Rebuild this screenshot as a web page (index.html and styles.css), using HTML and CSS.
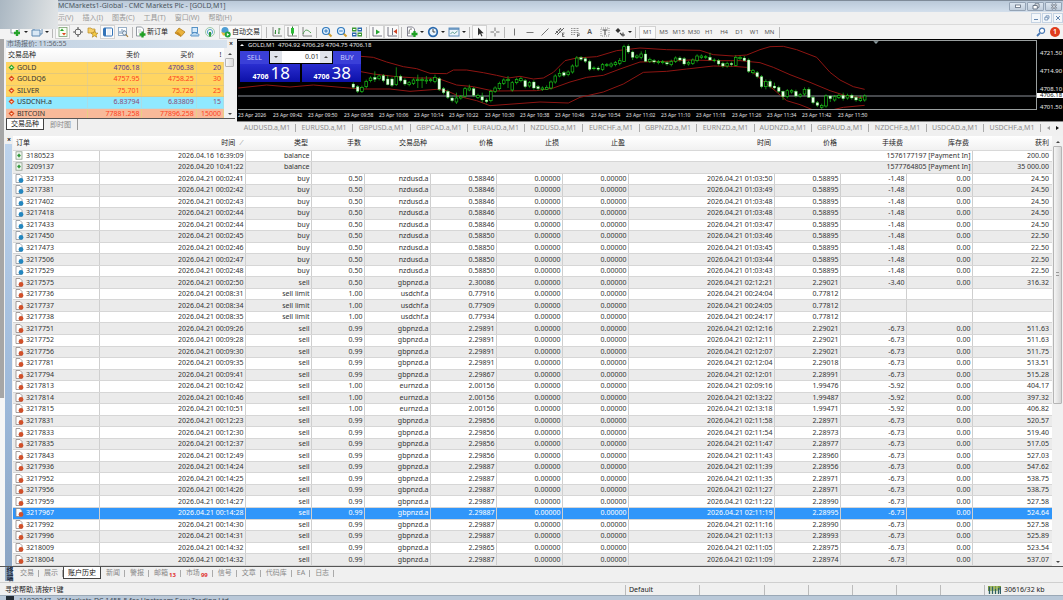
FILE: index.html
```html
<!DOCTYPE html>
<html lang="zh-CN">
<head>
<meta charset="utf-8">
<title>MCMarkets1-Global</title>
<link rel="stylesheet" href="styles.css">
</head>
<body>
<svg class="defs" aria-hidden="true">
  <symbol id="doc-buy" viewBox="0 0 9 9"><path d="M1 .5h4L7 2.500V8.500H1z" fill="#fff" stroke="#8a9099" stroke-width=".8"/><circle cx="6" cy="6.400" r="2.400" fill="#2387c0"/></symbol>
  <symbol id="doc-sell" viewBox="0 0 9 9"><path d="M1 .5h4L7 2.500V8.500H1z" fill="#fff" stroke="#8f8583" stroke-width=".8"/><circle cx="6" cy="6.400" r="2.400" fill="#d2502a"/></symbol>
  <symbol id="doc-balance" viewBox="0 0 9 9"><rect x="1" y=".8" width="6" height="7.400" fill="#f4faf4" stroke="#8a9a8a" stroke-width=".8"/><path d="M4 2.800V6.200M2.300 4.500H5.700" stroke="#2f9638" stroke-width="1.600"/></symbol>
  <symbol id="up" viewBox="0 0 7 7"><path d="M3.500 .5 6.500 3.500 3.500 6.500 .5 3.500z" fill="#2fa52f"/><path d="M3.500 2 5 4H2z" fill="#d8ffd0"/></symbol>
  <symbol id="down" viewBox="0 0 7 7"><path d="M3.500 .5 6.500 3.500 3.500 6.500 .5 3.500z" fill="#dc4a1c"/><path d="M3.500 5 5 3H2z" fill="#ffd9b8"/></symbol>
</svg>

<header class="titlebar">
  <h1 class="title">MCMarkets1-Global - CMC Markets Plc - [GOLD,M1]</h1>
  <div class="win-buttons">
    <button class="win" aria-label="最小化"><svg width="8" height="6" viewBox="0 0 8 6"><rect x="1.500" y="2" width="5" height="2.500" fill="#fff" stroke="#5f6c7d" stroke-width=".8"/></svg></button>
    <button class="win" aria-label="还原"><svg width="8" height="7" viewBox="0 0 8 7"><path d="M3 2V.8h4v3.500H5.500M1 2.500h4.300v3.500H1z" fill="#fff" stroke="#5f6c7d" stroke-width=".9"/></svg></button>
    <button class="win" aria-label="关闭"><svg width="8" height="7" viewBox="0 0 8 7"><path d="M1.500 1 6.500 6M6.500 1 1.500 6" stroke="#5f6c7d" stroke-width="2.200"/><path d="M1.500 1 6.500 6M6.500 1 1.500 6" stroke="#fff" stroke-width=".9"/></svg></button>
  </div>
</header>

<nav class="menubar">
  <button class="menu">显示(V)</button><button class="menu">插入(I)</button><button class="menu">图表(C)</button><button class="menu">工具(T)</button><button class="menu">窗口(W)</button><button class="menu">帮助(H)</button>
  <div class="child-buttons">
    <button class="child" aria-label="最小化子窗口"><svg width="6" height="6" viewBox="0 0 6 6"><path d="M1 4.500h4" stroke="#6486ad"/></svg></button>
    <button class="child" aria-label="还原子窗口"><svg width="6" height="6" viewBox="0 0 6 6"><path d="M2 2V.8h3v2.500H4M.8 2.300h3v2.700h-3z" fill="none" stroke="#6486ad" stroke-width=".8"/></svg></button>
    <button class="child" aria-label="关闭子窗口"><svg width="6" height="6" viewBox="0 0 6 6"><path d="M1 1 5 5M5 1 1 5" stroke="#6486ad"/></svg></button>
  </div>
</nav>
<div class="cover"></div>

<div class="toolbar">
  <button class="tool" aria-label="新图表"><svg width="12" height="12" viewBox="0 0 12 12"><rect x="1" y="1" width="8" height="6" fill="#fff" stroke="#7d8b99" stroke-width=".8"/><path d="M7 4v6M4 7h6" stroke="#26a32a" stroke-width="2.400"/></svg></button><span class="drop"></span>
  <button class="tool" aria-label="配置"><svg width="12" height="12" viewBox="0 0 12 12"><path d="M3 2h8v6H3z" fill="#fff" stroke="#5d87b0"/><path d="M1 4h8v6H1z" fill="#d9e8f5" stroke="#5d87b0"/></svg></button><span class="drop"></span>
  <span class="sep"></span>
  <button class="tool on" aria-label="市场报价"><svg width="12" height="12" viewBox="0 0 12 12"><rect x="2" y="1.500" width="8" height="9" fill="#f6fff2" stroke="#7b9f70" stroke-width=".8"/><path d="M5 2.500 7 5H3z" fill="#28a428"/><path d="M7 9.500 9 7H5z" fill="#e0461e"/></svg></button>
  <button class="tool" aria-label="数据窗口"><svg width="12" height="12" viewBox="0 0 12 12"><circle cx="6" cy="6" r="3" fill="none" stroke="#666"/><path d="M6 1v3M6 8v3M1 6h3M8 6h3" stroke="#666" stroke-width="1.200"/></svg></button>
  <button class="tool" aria-label="导航"><svg width="12" height="12" viewBox="0 0 12 12"><path d="M1 3V2h3l1 1h3v4H1z" fill="#f7d06a" stroke="#b88b24" stroke-width=".7"/><path d="M7.500 4.500 8.500 7l2.500.2-2 1.600.7 2.400-2.200-1.400-2.200 1.400.7-2.400-2-1.600L6.500 7z" fill="#f5cc45" stroke="#a87c16" stroke-width=".6"/></svg></button>
  <button class="tool on" aria-label="终端"><svg width="12" height="12" viewBox="0 0 12 12"><rect x="1.500" y="2" width="9" height="8" rx="1" fill="#fff" stroke="#3273b8"/><path d="M3 2v8" stroke="#3273b8" stroke-width="2"/><path d="M5 4h4M5 6h4M5 8h4" stroke="#c5d7ea" stroke-width=".7"/></svg></button>
  <button class="tool" aria-label="策略测试"><svg width="12" height="12" viewBox="0 0 12 12"><rect x="1.500" y="1.500" width="8" height="8" fill="#fff" stroke="#7f9dbb" stroke-width=".8"/><path d="M3 8V5M5 8V3M7 8V4" stroke="#6a8fb5"/><circle cx="7.500" cy="7" r="2" fill="#e8f2fb" stroke="#667c93" stroke-width=".8"/><path d="M9 8.500 11 11" stroke="#a77b33" stroke-width="1.200"/></svg></button>
  <span class="sep"></span>
  <button class="wide-tool"><svg width="11" height="12" viewBox="0 0 11 12"><path d="M1.500 1h5l2 2v7h-7z" fill="#fff" stroke="#78828c" stroke-width=".8"/><path d="M3 4h3M3 6h3" stroke="#9aa4ad" stroke-width=".6"/><path d="M7.500 5.500v6M4.500 8.500h6" stroke="#1fa124" stroke-width="2.300"/></svg>新订单</button>
  <button class="tool" aria-label="MetaEditor"><svg width="12" height="12" viewBox="0 0 12 12"><path d="M1 7 5 2l6 4-4 4.500z" fill="#eab23c" stroke="#a87213" stroke-width=".7"/><path d="m1 7 6 3.500V9L4 6z" fill="#c98a1c"/></svg></button>
  <button class="tool" aria-label="社区"><svg width="12" height="12" viewBox="0 0 12 12"><rect x="3" y="1.500" width="5.500" height="5" fill="#d7ebfb" stroke="#4688c0" stroke-width=".9"/><path d="M2 10c-1-1 0-2 1-2 1-2 4-2 4.500-.500 2-.500 3.500 2 2 2.500z" fill="#b9d8f2" stroke="#3d80bb" stroke-width=".8"/></svg></button>
  <button class="tool" aria-label="信号"><svg width="12" height="12" viewBox="0 0 12 12"><circle cx="6" cy="6" r="4.500" fill="none" stroke="#9ccaa8"/><circle cx="6" cy="6" r="2.600" fill="none" stroke="#5aa7cf"/><path d="M6 6v4.500" stroke="#2e9a40" stroke-width="2"/></svg></button>
  <button class="wide-tool on auto"><svg width="11" height="12" viewBox="0 0 11 12"><circle cx="5" cy="4.500" r="3.500" fill="#4d9ed4"/><path d="M1 6c2 1 6 1 8 0l-1 3.500H3z" fill="#e5bc3f"/><circle cx="7.700" cy="8.500" r="3" fill="#21a33a"/><path d="m6.900 7 2.300 1.500L6.900 10z" fill="#fff"/></svg>自动交易</button>
  <span class="sep"></span>
  <button class="tool" aria-label="柱状图"><svg width="12" height="12" viewBox="0 0 12 12"><path d="M2 1v9h9" fill="none" stroke="#777" stroke-width=".9"/><path d="M4.500 4v4M4.500 7H3.500M8 2v6M8 3h1.500M8 7H7" stroke="#388a3b" fill="none"/></svg></button>
  <button class="tool on" aria-label="蜡烛图"><svg width="12" height="12" viewBox="0 0 12 12"><path d="M2 1v9h9" fill="none" stroke="#777" stroke-width=".9"/><path d="M6.500 .5v9" stroke="#237a27"/><rect x="5" y="2" width="3" height="5.500" fill="#2bbb36"/></svg></button>
  <button class="tool" aria-label="折线图"><svg width="12" height="12" viewBox="0 0 12 12"><path d="M2 1v9h9" fill="none" stroke="#777" stroke-width=".9"/><path d="M2 8c2-5 4-5 8-1" fill="none" stroke="#4b9a4d"/></svg></button>
  <span class="sep"></span>
  <button class="tool" aria-label="放大"><svg width="12" height="12" viewBox="0 0 12 12"><path d="m7.500 7.500 3 3" stroke="#d2a030" stroke-width="2"/><circle cx="5" cy="5" r="3.500" fill="#e2f1fd" stroke="#2f78bc" stroke-width="1.200"/><path d="M3.200 5h3.600M5 3.200v3.600" stroke="#2f78bc"/></svg></button>
  <button class="tool" aria-label="缩小"><svg width="12" height="12" viewBox="0 0 12 12"><path d="m7.500 7.500 3 3" stroke="#d2a030" stroke-width="2"/><circle cx="5" cy="5" r="3.500" fill="#e2f1fd" stroke="#2f78bc" stroke-width="1.200"/><path d="M3.200 5h3.600" stroke="#2f78bc"/></svg></button>
  <button class="tool" aria-label="平铺窗口"><svg width="12" height="12" viewBox="0 0 12 12"><path d="M1 1.500h4.500v4H1zM6.500 6.500H11v4H6.500z" fill="#3c9a34"/><path d="M6.500 1.500H11v4H6.500zM1 6.500h4.500v4H1z" fill="#2b69ad"/><path d="M2 3.500h2.500M7.500 3.500H10M2 8.500h2.500M7.500 8.500H10" stroke="#fff"/></svg></button>
  <span class="sep"></span>
  <button class="tool on" aria-label="自动滚动"><svg width="12" height="12" viewBox="0 0 12 12"><path d="M2 1v9h9" fill="none" stroke="#667" stroke-width=".9"/><path d="m5 3.500 4 2.500-4 2.500z" fill="#27a433"/></svg></button>
  <button class="tool on" aria-label="图表平移"><svg width="12" height="12" viewBox="0 0 12 12"><path d="M2 1v9h9M6.500 2v7" fill="none" stroke="#667" stroke-width=".9"/><path d="m11 3-3.500 2.500L11 8z" fill="#cf4325"/></svg></button>
  <span class="sep"></span>
  <button class="tool" aria-label="指标"><svg width="12" height="12" viewBox="0 0 12 12"><path d="M1.500 1h5l2 2v7h-7z" fill="#fff" stroke="#667" stroke-width=".8"/><path d="M3 8c0-5 1-5 3-5" fill="none" stroke="#555" stroke-width=".9"/><path d="M8.500 5v6M5.500 8h6" stroke="#1fa124" stroke-width="2.300"/></svg></button><span class="drop"></span>
  <button class="tool" aria-label="周期"><svg width="12" height="12" viewBox="0 0 12 12"><circle cx="6" cy="6" r="4.300" fill="#eaf4fc" stroke="#2a69ad" stroke-width="1.700"/><path d="M6 3v3h2.300" fill="none" stroke="#333" stroke-width=".9"/></svg></button><span class="drop"></span>
  <button class="tool" aria-label="模板"><svg width="12" height="12" viewBox="0 0 12 12"><rect x="1" y="2" width="10" height="8" fill="#edf5fb" stroke="#5688b8" stroke-width=".9"/><path d="M1 3h10" stroke="#5688b8" stroke-width="1.500"/><path d="m2.500 8 2-2 2 1.500L9.500 5" fill="none" stroke="#3d8a76" stroke-width=".8"/></svg></button><span class="drop"></span>
  <span class="sep"></span>
  <button class="tool on" aria-label="光标"><svg width="12" height="12" viewBox="0 0 12 12"><path d="M4 1.500v8l2-2 1.500 3L8.500 10 7.200 7.200h2.500z" fill="#333"/></svg></button>
  <button class="tool" aria-label="十字准线"><svg width="12" height="12" viewBox="0 0 12 12"><path d="M6 1.500v3.500M6 7v3.500M1.500 6H5M7 6h3.500" stroke="#777"/></svg></button>
  <span class="sep"></span>
  <button class="tool" aria-label="垂直线"><svg width="12" height="12" viewBox="0 0 12 12"><path d="M5.500 2.500v7" stroke="#777"/></svg></button>
  <button class="tool" aria-label="水平线"><svg width="12" height="12" viewBox="0 0 12 12"><path d="M2.500 6.500h7" stroke="#777"/></svg></button>
  <button class="tool" aria-label="趋势线"><svg width="12" height="12" viewBox="0 0 12 12"><path d="m2.500 9.500 7-7" stroke="#666" stroke-width=".9"/></svg></button>
  <button class="tool" aria-label="等距通道"><svg width="12" height="12" viewBox="0 0 12 12"><path d="m1 8 6-6M3 9l7-7M2 5l3 3M4 3.500l3 3M6 2l2 3" stroke="#555" stroke-width=".9"/><path d="M10.500 7H8.500v3.500h2M8.500 8.700h1.500" fill="none" stroke="#444" stroke-width=".7"/></svg></button>
  <button class="tool" aria-label="斐波那契"><svg width="12" height="12" viewBox="0 0 12 12"><path d="M2 2.500h8M2 4.500h8M2 6.500h8M2 8.500h4" stroke="#777" stroke-width=".8" stroke-dasharray="1 .5"/><path d="M8.500 11V8H11M8.500 9.500h2" fill="none" stroke="#444" stroke-width=".7"/></svg></button>
  <button class="tool letter">A</button>
  <button class="tool" aria-label="文本标签"><svg width="12" height="12" viewBox="0 0 12 12"><rect x="2" y="2" width="8" height="8" fill="none" stroke="#777" stroke-width=".8" stroke-dasharray="1 1"/><path d="M3.500 4h5M6 4v5" stroke="#444"/></svg></button>
  <button class="tool" aria-label="箭头"><svg width="12" height="12" viewBox="0 0 12 12"><path d="M4 2 6.500 4.500 4 7 1.500 4.500z" fill="#333"/><path d="m6 7 2 2M9 6.500v4M7 9h4" stroke="#444" stroke-width="1.100"/></svg></button><span class="drop"></span>
  <span class="sep"></span>
  <div class="frames">
    <button class="frame on">M1</button><button class="frame">M5</button><button class="frame">M15</button><button class="frame">M30</button><button class="frame">H1</button><button class="frame">H4</button><button class="frame">D1</button><button class="frame">W1</button><button class="frame">MN</button>
  </div>
  <span class="sep"></span>
  <div class="tool-end">
    <button class="tool" aria-label="搜索"><svg width="10" height="10" viewBox="0 0 10 10"><path d="M4 6 1 9" stroke="#4a79b4" stroke-width="1.800"/><circle cx="6" cy="3.800" r="2.600" fill="#fff" stroke="#4a79b4" stroke-width="1.200"/></svg></button>
    <button class="badge">1</button>
  </div>
</div>

<main class="workspace">
  <section class="market">
    <div class="market-title"><span>市场报价: 11:56:55</span><button class="close" aria-label="关闭市场报价">×</button></div>
    <div class="market-body">
      <table class="quotes">
        <colgroup><col class="q-name"><col class="q-price"><col class="q-price"><col class="q-spread"></colgroup>
        <thead><tr><th>交易品种</th><th>卖价</th><th>买价</th><th>!</th></tr></thead>
        <tbody>
          <tr class="gold blue"><td><svg class="dot"><use href="#up"/></svg>GOLD</td><td>4706.18</td><td>4706.38</td><td>20</td></tr>
          <tr class="gold"><td><svg class="dot"><use href="#down"/></svg>GOLDQ6</td><td>4757.95</td><td>4758.25</td><td>30</td></tr>
          <tr class="gold"><td><svg class="dot"><use href="#down"/></svg>SILVER</td><td>75.701</td><td>75.726</td><td>25</td></tr>
          <tr class="cyan"><td><svg class="dot"><use href="#down"/></svg>USDCNH.a</td><td>6.83794</td><td>6.83809</td><td>15</td></tr>
          <tr class="salmon"><td><svg class="dot"><use href="#down"/></svg>BITCOIN</td><td>77881.258</td><td>77896.258</td><td>15000</td></tr>
        </tbody>
      </table>
      <div class="scroll"><span class="arrow-up"></span><span class="thumb short"></span><span class="arrow-down"></span></div>
    </div>
    <div class="market-tabs"><button class="mtab active">交易品种</button><button class="mtab">即时图</button></div>
  </section>

  <section class="charts">
    <div class="chart">
      <div class="plot-col">
        <div class="plot">
          <svg class="candles" width="799" height="69" viewBox="714 121 2397 207">
            <path d="M714 286H6000" stroke="#8c9199" stroke-width="3"/>
            <g class="band">
              <polyline transform="translate(690)" points="393,167 430,170 470,184 520,198 560,204 600,218 650,219 670,208 710,208 760,216 800,224 835,232 870,227 910,235 940,232 970,215 1005,180 1040,172 1100,168 1160,150 1230,142 1310,147 1410,149 1450,162 1510,166 1550,163 1590,147 1620,138 1660,137 1700,147 1760,170 1800,215 1830,238 1870,258 1904,266"/>
              <polyline transform="translate(690)" points="393,213 430,220 500,228 560,232 620,232 680,253 730,258 790,271 920,270 970,262 1020,244 1070,230 1120,224 1170,205 1230,184 1310,182 1380,178 1460,180 1530,180 1590,186 1630,200 1680,222 1740,245 1800,270 1850,286 1904,292"/>
              <polyline transform="translate(690)" points="25,262 110,253 180,259 250,253 393,265 480,265 540,272 620,266 650,270 690,288 740,300 780,315 930,304 1015,307 1050,290 1120,274 1180,250 1240,215 1310,212 1370,205 1450,196 1510,197 1550,200 1580,225 1635,270 1670,300 1710,312 1750,328 1805,328 1840,320 1904,314"/>
            </g>
            <g id="candles"></g>
            <path d="M2620 122h16l-8 8z" fill="#90a0a4"/>
          </svg>
          <div class="plot-name"><span class="tri"></span>GOLD,M1&nbsp; 4704.92 4706.29 4704.75 4706.18</div>
        </div>
        <div class="times">
          <span>23 Apr 2026</span><span>23 Apr 09:42</span><span>23 Apr 09:50</span><span>23 Apr 09:58</span><span>23 Apr 10:06</span><span>23 Apr 10:14</span><span>23 Apr 10:22</span><span>23 Apr 10:30</span><span>23 Apr 10:38</span><span>23 Apr 10:46</span><span>23 Apr 10:54</span><span>23 Apr 11:02</span><span>23 Apr 11:10</span><span>23 Apr 11:18</span><span>23 Apr 11:26</span><span>23 Apr 11:34</span><span>23 Apr 11:42</span><span>23 Apr 11:50</span>
        </div>
      </div>
      <div class="prices"><span>4721.50</span><span>4714.90</span><span>4708.10</span><span class="now">4706.18</span><span>4701.50</span></div>
      <div class="trade">
        <button class="side sell-label">SELL</button>
        <div class="lots"><button class="step" aria-label="减少"><span class="arrow-down"></span></button><input class="lot" value="0.01" aria-label="手数"><button class="step" aria-label="增加"><span class="arrow-up"></span></button></div>
        <button class="side buy-label">BUY</button>
        <div class="big"><small>4706</small>18</div>
        <div class="big"><small>4706</small>38</div>
      </div>
    </div>
    <div class="chart-tabs">
      <button class="ctab">AUDUSD.a,M1</button><button class="ctab">EURUSD.a,M1</button><button class="ctab">GBPUSD.a,M1</button><button class="ctab">GBPCAD.a,M1</button><button class="ctab">EURAUD.a,M1</button><button class="ctab">NZDUSD.a,M1</button><button class="ctab">EURCHF.a,M1</button><button class="ctab">GBPNZD.a,M1</button><button class="ctab">EURNZD.a,M1</button><button class="ctab">AUDNZD.a,M1</button><button class="ctab">GBPAUD.a,M1</button><button class="ctab">NZDCHF.a,M1</button><button class="ctab">USDCAD.a,M1</button><button class="ctab">USDCHF.a,M1</button>
      <div class="tab-nav"><button class="nav off" aria-label="向左"></button><button class="nav" aria-label="向右"></button></div>
    </div>
  </section>
</main>

<section class="terminal">
  <div class="gutter"></div>
  <div class="rail"><button class="close" aria-label="关闭终端">×</button><div class="rail-fill"></div></div>
  <div class="history">
    <table class="orders">
      <colgroup><col class="w-order"><col class="w-time"><col class="w-std"><col class="w-lots"><col class="w-std"><col class="w-std"><col class="w-std"><col class="w-std"><col class="w-time"><col class="w-std"><col class="w-std"><col class="w-std"><col class="w-profit"></colgroup>
      <thead><tr><th>订单</th><th>时间 <i class="sort">⁄</i></th><th>类型</th><th>手数</th><th>交易品种</th><th>价格</th><th>止损</th><th>止盈</th><th>时间</th><th>价格</th><th>手续费</th><th>库存费</th><th>获利</th></tr></thead>
      <tbody id="rows"></tbody>
    </table>
  </div>
  <div class="scroll tall"><span class="arrow-up"></span><span class="thumb long"></span><span class="arrow-down"></span></div>
</section>

<nav class="terminal-tabs">
  <span class="vertical">终端</span>
  <button class="ttab">交易</button><button class="ttab">展示</button><button class="ttab active">账户历史</button><button class="ttab">新闻</button><button class="ttab">警报</button><button class="ttab">邮箱<sub>13</sub></button><button class="ttab">市场<sub>99</sub></button><button class="ttab">信号</button><button class="ttab">文章</button><button class="ttab">代码库</button><button class="ttab">EA</button><button class="ttab">日志</button>
</nav>

<footer class="status">
  <span class="help">寻求帮助,请按F1键</span><span class="cell profile">Default</span><span class="cell s1"></span><span class="cell s2"></span><span class="cell s2"></span><span class="cell s2"></span><span class="cell s2"></span><span class="cell s2"></span>
  <span class="cell net"><svg width="13" height="8" viewBox="0 0 13 8"><path d="M0 0h13v3L9 5H0z" fill="#7d9c3a"/><path d="M1.500 1v7M4.500 1v7M7.500 3v5M10.500 2v6M12.500 1v7" stroke="#2f5f66" stroke-width="1.400"/><path d="M3 0v8M6 0v8M9 0v8" stroke="#d9e6b8" stroke-width=".8"/></svg>30616/32 kb</span>
</footer>
<div class="behind"><span class="behind-icon"></span><span>11920247 - XEMarkets-DC 1455-5 for Upstream Easy Trading Ltd</span></div>
<script src="app.js"></script>
</body>
</html>
```
FILE: styles.css
```css
* { box-sizing: border-box; }
body {
  margin: 0;
  height: 100vh;
  display: flex;
  flex-direction: column;
  overflow: hidden;
  position: relative;
  background: #f0f0f0;
  color: #333;
  font: 7px/10px "Noto Sans", "Noto Sans CJK SC", sans-serif;
}
button { border: 0; padding: 0; margin: 0; background: none; font: inherit; color: inherit; white-space: nowrap; }
svg { display: block; flex: none; }
table { border-collapse: collapse; table-layout: fixed; width: 100%; }
.defs { position: absolute; width: 0; height: 0; }

.titlebar { flex: none; display: flex; align-items: center; height: 12px; padding-left: 58px; background: linear-gradient(#7f8b99 0 1px, #bac9d9 1px, #d3dfec); }
.title { margin: 0; font-size: 7px; font-weight: 400; color: #4a5560; white-space: nowrap; }
.win-buttons { display: flex; gap: 1px; margin-left: auto; padding-right: 1px; }
.win { width: 17px; height: 9px; display: flex; align-items: center; justify-content: center; border: 1px solid #94a3b5; border-radius: 1px; background: linear-gradient(#dce6f0, #c0cddc); }
.menubar { flex: none; display: flex; align-items: center; height: 12px; gap: 9px; padding-left: 51px; color: #999; }
.child-buttons { display: flex; gap: 1px; margin-left: auto; }
.child { width: 10px; height: 10px; display: flex; align-items: center; justify-content: center; border: 1px solid #c5d3e3; background: #f3f7fb; }
.cover { position: absolute; left: 0; top: 0; z-index: 2; width: 58px; height: 29px; background: linear-gradient(100deg, #aab7c2 0, #c3ccd3 45%, #d5dadd 75%, #e2e5e7); }

.toolbar { flex: none; display: flex; align-items: center; height: 15px; padding-left: 8px; border-top: 1px solid #dadada; background: #f3f3f3; }
.tool { flex: none; width: 15px; height: 14px; display: flex; align-items: center; justify-content: center; }
.tool.on, .wide-tool.on, .frame.on { border: 1px solid #d2d2d2; background: #fafafa; }
.tool.letter { font-weight: 600; color: #555; }
.drop { flex: none; width: 6px; display: flex; justify-content: center; }
.drop::after { content: ""; border: 2px solid transparent; border-top-color: #222; border-bottom: 0; }
.sep { flex: none; width: 5px; height: 11px; background: linear-gradient(#b8b8b8, #b8b8b8) 2px 0 / 1px 100% no-repeat; }
.wide-tool { flex: none; width: 37px; height: 14px; display: flex; align-items: center; gap: 1px; color: #222; }
.wide-tool.auto { width: 43px; margin: 0 2px; }
.frames { display: flex; flex: 0 0 138px; height: 13px; margin-left: 1px; }
.frame { flex: 1; font-size: 6px; color: #555; }
.tool-end { display: flex; align-items: center; gap: 2px; margin-left: auto; padding-right: 3px; }
.badge { width: 10px; height: 10px; border-radius: 5px; background: #e03c1c; color: #fff; font-weight: 600; line-height: 10px; }

.workspace { flex: none; display: flex; height: 97px; padding-left: 6px; background: linear-gradient(90deg, #a6a6a6 0 4px, #f0f0f0 4px); }
.market { flex: 0 0 229px; display: flex; flex-direction: column; height: 93px; padding-top: 1px; }
.market-title { display: flex; align-items: center; justify-content: space-between; height: 8px; padding-left: 1px; color: #5d6670; background: linear-gradient(90deg, #c2d2e2, #d8e3ee); }
.close { width: 8px; height: 8px; font-weight: 700; line-height: 8px; color: #222; background: #f0f0f0; }
.market-body { display: flex; height: 71px; overflow: hidden; border-bottom: 1px solid #555; background: #fff; }
.q-name { width: 81px; } .q-price { width: 54px; } .q-spread { width: 27px; }
.quotes { flex: 1; height: 72px; }
.quotes th { height: 14px; padding: 0 2px; font-weight: 400; text-align: right; color: #222; background: linear-gradient(#fff, #f3f3f3); }
.quotes th:first-child { text-align: left; }
.quotes td { height: 11px; padding: 0 2px; text-align: right; color: #ff4020; border-bottom: 1px solid #e5c878; border-right: 1px solid #e8cf86; }
.quotes td:first-child { text-align: left; color: #333; }
.quotes tr.blue td { color: #5a3a92; }
.quotes tr.blue td:first-child { color: #333; }
.gold { background: #ffd562; }
.cyan { background: #90e9ff; }
.cyan td { border-color: #a8dde8; }
.quotes .cyan td { color: #8a4a78; }
.quotes .cyan td:first-child { color: #333; }
.salmon { background: #f8ba9a; }
.dot { display: inline-block; width: 7px; height: 7px; margin-right: 2px; vertical-align: -1px; }
.scroll { flex: 0 0 11px; display: flex; flex-direction: column; align-items: center; padding: 5px 0 3px; background: #f1f1f1; }
.arrow-up { border: 2px solid transparent; border-bottom-color: #444; border-top: 0; }
.arrow-down { border: 2px solid transparent; border-top-color: #444; border-bottom: 0; margin-top: auto; }
.thumb { width: 9px; border: 1px solid #b5b5b5; border-radius: 1px; background: linear-gradient(90deg, #f7f7f7, #dadada); }
.thumb.short { height: 9px; margin-top: 3px; }
.market-tabs { display: flex; height: 12px; color: #888; }
.mtab { height: 11px; padding: 0 6px; border-right: 1px solid #999; }
.mtab.active { color: #222; background: #fff; border: 1px solid #444; border-top: 0; padding: 0 4px; }

.charts { flex: 1; min-width: 0; display: flex; flex-direction: column; padding-left: 2px; }
.chart { position: relative; display: flex; height: 83px; background: #000; border-bottom: 1px solid #888; color: #e6e6e6; font-size: 6px; line-height: 8px; }
.plot-col { flex: 1; min-width: 0; padding: 1px 0 0 1px; }
.plot { position: relative; height: 70px; overflow: hidden; border: 1px solid #9a9f9f; border-left: 0; }
.plot-name { position: absolute; left: 2px; top: 0; display: flex; align-items: center; gap: 4px; white-space: nowrap; font-size: 6px; }
.tri { border: 2px solid transparent; border-bottom-color: #fff; border-top: 0; }
.band { fill: none; stroke: #8e1512; stroke-width: 3; }
.bull { fill: #000; stroke: #19c819; stroke-width: 2; }
.bear { fill: #eaffea; stroke: #3be03b; stroke-width: 1; }
.wick { stroke: #19c819; stroke-width: 2; }
.times { display: grid; grid-template-columns: 35px 35px 36px 35px 35px 35px 36px 35px 35px 36px 35px 35px 35px 36px 35px 35px 36px 35px; padding-top: 1px; font-size: 5px; white-space: nowrap; }
.prices { flex: 0 0 26px; display: flex; flex-direction: column; padding-top: 12px; font-size: 6px; line-height: 5px; }
.prices span { height: 5px; margin-bottom: 13px; padding-left: 3px; }
.prices span:nth-child(3) { margin-bottom: 1px; }
.prices .now { margin-bottom: 7px; color: #111; background: #fff; }
.trade { position: absolute; left: 3px; top: 12px; display: grid; grid-template: 13px 18px / 29px 31px 2px 31px 28px; width: 121px; color: #fff; background: #000; }
.side { background: #3a3fd8; color: #c8ccff; font-size: 7px; }
.sell-label { grid-column: 1; }
.buy-label { grid-column: 5; }
.lots { grid-column: 2 / 5; display: flex; margin: 0 1px 1px; background: #fff; }
.step { width: 12px; display: flex; align-items: center; justify-content: center; background: #dfe3ea; }
.step .arrow-down { margin: 0; }
.lot { flex: 1; min-width: 0; width: 20px; border: 0; padding: 0 1px; text-align: right; font: inherit; font-size: 7px; color: #333; background: #fff; }
.big { grid-column: 1 / 3; display: flex; align-items: baseline; justify-content: flex-end; gap: 2px; padding-right: 10px; font-size: 17px; line-height: 17px; background: linear-gradient(#2a2ed0, #0c10a8); }
.big + .big { grid-column: 4 / 6; }
.big small { font-size: 7px; font-weight: 700; }
.chart-tabs { display: flex; align-items: center; height: 12px; padding-left: 2px; color: #8c8c8c; }
.ctab { flex: 0 1 57px; line-height: 8px; border-right: 1px solid #aaa; }
.ctab:nth-child(3n) { flex-basis: 58px; }
.tab-nav { display: flex; gap: 6px; margin-left: auto; padding-right: 4px; }
.nav { border: 2px solid transparent; border-left: 3px solid #111; border-right: 0; }
.nav.off { border-left: 0; border-right: 3px solid #999; }

.terminal { flex: 1; min-height: 0; display: flex; border-bottom: 1px solid #555; }
.gutter { flex: 0 0 5px; background: linear-gradient(90deg, #a6a6a6 0 4px, #eee 4px) 0 0 / 100% 262px no-repeat #f6f6f6; }
.rail { flex: 0 0 8px; display: flex; flex-direction: column; }
.rail-fill { flex: 1; width: 7px; background: linear-gradient(#bdd3ec, #9db9da 60%, #8ba5c4); }
.history { flex: 1; min-width: 0; background: #fff; }
.orders { height: 100%; }
.w-order { width: 86px; } .w-time { width: 146px; } .w-std { width: 66px; } .w-lots { width: 53px; } .w-profit { width: 80px; }
.orders th { height: 14px; padding: 0 3px; font-weight: 400; text-align: right; line-height: 10px; color: #222; background: linear-gradient(#fff, #f1f1f1); border-bottom: 1px solid #d8d8d8; }
.orders th:first-child { text-align: left; }
.sort { margin-left: 4px; color: #999; }
.orders td { padding: 0 1px; line-height: 10px; text-align: right; white-space: nowrap; border-right: 1px solid #cfcfcf; border-bottom: 1px solid #d6d6d6; }
.orders td:first-child { text-align: left; padding-left: 2px; }
.orders td:last-child { border-right: 0; padding-right: 3px; }
.orders tr:nth-child(even) td { background: #ebebeb; }
.orders tr.picked td { background: #3096fa; color: #fff; }
.row-icon { display: inline-block; width: 9px; height: 9px; margin-right: 2px; vertical-align: -2px; }
.scroll.tall { padding: 5px 0 3px; }
.thumb.long { height: 258px; margin-top: 3px; background: linear-gradient(#999, #999) 50% 49% / 3px 1px no-repeat, linear-gradient(#999, #999) 50% 50% / 3px 1px no-repeat, linear-gradient(90deg, #f5f5f5, #d6d6d6); }

.terminal-tabs { flex: none; display: flex; height: 15px; padding-left: 5px; color: #888; }
.vertical { width: 8px; height: 14px; writing-mode: vertical-rl; line-height: 8px; font-weight: 700; color: #1e2a3c; background: #8ba5c4; }
.ttab { position: relative; height: 12px; padding: 0 5px; }
.ttab::after { content: ""; position: absolute; right: 0; top: 3px; height: 7px; border-right: 1px solid #aaa; }
.ttab:nth-child(2) { margin-left: 2px; }
.ttab.active { color: #111; background: #fff; border: 1px solid #444; border-top: 0; padding: 0 4px; }
.ttab.active::after { content: none; }
.ttab sub { margin-left: 1px; font-size: 6px; font-weight: 700; line-height: 6px; color: #e03030; }
.status { flex: none; display: flex; align-items: center; height: 13px; padding: 1px 0 0 5px; border-top: 1px solid #cfcfcf; color: #222; }
.help { flex: 1; }
.cell { height: 10px; padding-left: 3px; border-left: 1px solid #bbb; }
.profile { width: 74px; } .s1 { width: 65px; } .s2 { width: 44px; }
.net { display: flex; align-items: center; gap: 3px; width: 79px; }
.behind { flex: none; display: flex; gap: 5px; height: 5px; overflow: hidden; padding-left: 6px; background: #b9c8d8; color: #3d4854; line-height: 9px; border-top: 1px solid #9aa8b6; }
.behind-icon { width: 8px; background: #222b33; }
```
FILE: app.js
```js
// order, open time, type, lots, symbol, open price, close time, close price, commission, profit
const orders = `3217353|00:02:41|buy|0.50|nzdusd.a|0.58846|01:03:50|0.58895|-1.48|24.50
3217381|00:02:42|buy|0.50|nzdusd.a|0.58846|01:03:49|0.58895|-1.48|24.50
3217402|00:02:43|buy|0.50|nzdusd.a|0.58846|01:03:48|0.58895|-1.48|24.50
3217418|00:02:44|buy|0.50|nzdusd.a|0.58846|01:03:48|0.58895|-1.48|24.50
3217433|00:02:44|buy|0.50|nzdusd.a|0.58846|01:03:47|0.58895|-1.48|24.50
3217450|00:02:45|buy|0.50|nzdusd.a|0.58850|01:03:46|0.58895|-1.48|22.50
3217473|00:02:46|buy|0.50|nzdusd.a|0.58850|01:03:45|0.58895|-1.48|22.50
3217506|00:02:47|buy|0.50|nzdusd.a|0.58850|01:03:44|0.58895|-1.48|22.50
3217529|00:02:48|buy|0.50|nzdusd.a|0.58850|01:03:43|0.58895|-1.48|22.50
3217575|00:02:50|sell|0.50|gbpnzd.a|2.30086|02:12:21|2.29021|-3.40|316.32
3217736|00:08:31|sell limit|1.00|usdchf.a|0.77916|00:24:04|0.77812||
3217737|00:08:34|sell limit|1.00|usdchf.a|0.77909|00:24:05|0.77812||
3217738|00:08:35|sell limit|1.00|usdchf.a|0.77934|00:24:17|0.77812||
3217751|00:09:26|sell|0.99|gbpnzd.a|2.29891|02:12:16|2.29021|-6.73|511.63
3217752|00:09:28|sell|0.99|gbpnzd.a|2.29891|02:12:11|2.29021|-6.73|511.63
3217756|00:09:30|sell|0.99|gbpnzd.a|2.29891|02:12:07|2.29021|-6.73|511.75
3217781|00:09:35|sell|0.99|gbpnzd.a|2.29891|02:12:04|2.29018|-6.73|513.51
3217794|00:09:41|sell|0.99|gbpnzd.a|2.29867|02:12:01|2.28991|-6.73|515.28
3217813|00:10:42|sell|1.00|eurnzd.a|2.00156|02:09:16|1.99476|-5.92|404.17
3217814|00:10:46|sell|1.00|eurnzd.a|2.00156|02:13:22|1.99487|-5.92|397.32
3217815|00:10:51|sell|1.00|eurnzd.a|2.00156|02:13:18|1.99471|-5.92|406.82
3217831|00:12:23|sell|0.99|gbpnzd.a|2.29856|02:11:58|2.28971|-6.73|520.57
3217833|00:12:30|sell|0.99|gbpnzd.a|2.29856|02:11:54|2.28973|-6.73|519.40
3217835|00:12:37|sell|0.99|gbpnzd.a|2.29856|02:11:47|2.28977|-6.73|517.05
3217843|00:12:49|sell|0.99|gbpnzd.a|2.29856|02:11:43|2.28960|-6.73|527.03
3217936|00:14:24|sell|0.99|gbpnzd.a|2.29887|02:11:39|2.28956|-6.73|547.62
3217952|00:14:25|sell|0.99|gbpnzd.a|2.29887|02:11:35|2.28971|-6.73|538.75
3217956|00:14:26|sell|0.99|gbpnzd.a|2.29887|02:11:27|2.28971|-6.73|538.75
3217959|00:14:27|sell|0.99|gbpnzd.a|2.29887|02:11:22|2.28990|-6.73|527.58
3217967|00:14:28|sell|0.99|gbpnzd.a|2.29887|02:11:19|2.28995|-6.73|524.64
3217992|00:14:30|sell|0.99|gbpnzd.a|2.29887|02:11:16|2.28990|-6.73|527.58
3217996|00:14:31|sell|0.99|gbpnzd.a|2.29887|02:11:13|2.28993|-6.73|525.89
3218009|00:14:32|sell|0.99|gbpnzd.a|2.29865|02:11:05|2.28975|-6.73|523.54
3218004|00:14:32|sell|0.99|gbpnzd.a|2.29887|02:11:09|2.28974|-6.73|537.07`.split('\n').map(line => line.split('|'));

const icon = name => `<svg class="row-icon"><use href="#doc-${name}"/></svg>`;
const balance = (id, time, note, sum) =>
  `<tr><td>${icon('balance')}${id}</td><td>${time}</td><td>balance</td><td colspan="9">${note} [Payment In]</td><td>${sum}</td></tr>`;
const day = '2026.04.21 ';

document.getElementById('rows').innerHTML =
  balance('3180523', '2026.04.16 16:39:09', '1576177197', '200.00') +
  balance('3209137', '2026.04.20 10:41:22', '1577764805', '35 000.00') +
  orders.map(([id, open, type, lots, symbol, price, close, out, fee, profit]) =>
    `<tr${id === '3217967' ? ' class="picked"' : ''}><td>${icon(type === 'buy' ? 'buy' : 'sell')}${id}</td>` +
    [day + open, type, lots, symbol, price, '0.00000', '0.00000', day + close, out, fee, fee ? '0.00' : '', profit]
      .map(v => `<td>${v}</td>`).join('') + '</tr>').join('');

// Body top and bottom of each candle; "w" marks a falling one, optional high and low follow.
const bars = `250-260w 258-272w 260-272 242-258 232-240 230-236w,212,244 226-234 225-240w 235-252w,224,254 235-254w 227-252,200,256 227-240w 238-250w 246-252 238-248 237-240,222,262 236-240,230,262 238-241,226,250 237-240 230-242,222,248 234-266w 264-276w 272-290w 292-300w 292-304,276,310 288-292 264-286 262-268,252,272 264-284w 284-290 288-298w,276,306 298-303w 272-300 262-272 248-264 238-248 236-240,226,262 246-268 236-246 234-240 240-258w 246-256 244-262w 258-264w 262-266 260-266,254,268 244-262 226-244 218-226,204,230 216-224w 214-222 196-214 172-196,166,200 171-176w 174-182w 182-206w 202-204 202-206w 192-206 192-194 190-196 186-192 180-188,172,194 138-182,132,184 136-154w 154-170w,150,178 166-170 160-170,152,176 160-182w,148,184 176-182 180-184w 183-186 183-186 186-190w 182-192 172-182 172-178w 174-190w 186-190 178-188 166-180 166-170 168-170 170-178w,156,180 178-180 180-190w 188-196w 188-196 188-192w 170-194,164,196 170-174 172-180w,166,182 178-212w 210-216 216-228w 228-258w 242-258,236,266 242-258w 256-262w,246,266 260-272w 272-288w,270,298 270-288 270-274 272-286w 282-286 266-280,260,286 266-290w,260,292 290-306w 306-314w 314-320 286-316 286-294w,284,304 288-298 284-290 284-294w,276,300 284-292 284-292w 290-298w 294-300,284,304 286-298`.split(' ');
document.getElementById('candles').innerHTML = bars.map((bar, i) => {
  const [body, high, low] = bar.split(',');
  const [top, bottom] = body.split('-').map(v => parseInt(v, 10));
  const x = 1060 + i * (1534 / (bars.length - 1));
  return `<path class="wick" d="M${x} ${high || top - 5}V${low || bottom + 5}"/>` +
    `<rect class="${body.endsWith('w') ? 'bear' : 'bull'}" x="${x - 4}" y="${top}" width="8" height="${bottom - top}"/>`;
}).join('');
```
